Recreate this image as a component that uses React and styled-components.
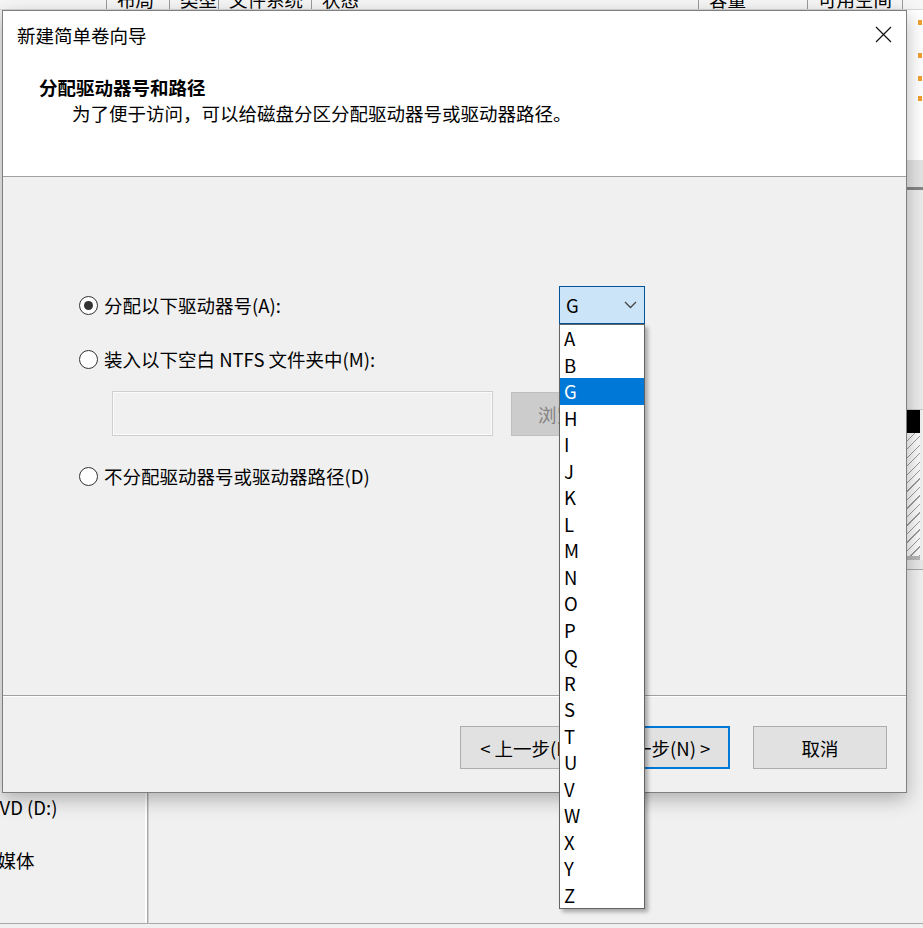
import styled, {createGlobalStyle} from 'styled-components';

const GlobalStyle = createGlobalStyle`
    html, body {
        margin: 0;
        padding: 0;
        background: #f0f0f0;
    }
    body {
        font-family: "Noto Sans CJK SC", "Noto Sans", sans-serif;
        color: #000;
    }
    * {
        box-sizing: border-box;
    }
`;

const FONT = 18.5;

const Screen = styled.div`
    position: relative;
    width: 923px;
    height: 928px;
    overflow: hidden;
    display: flex;
    flex-direction: column;
    background: #f0f0f0;
    font-size: ${FONT}px;
`;

/* ---------- window behind the dialog ---------- */

const ColumnHeader = styled.div`
    display: flex;
    height: 10px;
    overflow: hidden;
    background: #f6f6f6;
    border-bottom: 1px solid #d8d8d8;
`;

const HeaderCell = styled.div`
    width: ${({w}) => w}px;
    flex-shrink: 0;
    padding-left: 10px;
    border-right: 1px solid #9a9a9a;
    overflow: hidden;
    white-space: nowrap;
`;

const HeaderLabel = styled.span`
    display: block;
    line-height: 20px;
    margin-top: -11px;
    font-size: ${FONT}px;
`;

const Workspace = styled.div`
    flex: 1;
    display: flex;
    padding-bottom: 4px;
`;

const DiskLabels = styled.div`
    width: 148px;
    flex-shrink: 0;
    padding-top: 784px;
    border-right: 1px solid #a8a8a8;
    border-bottom: 1px solid #a8a8a8;
    box-shadow: inset -2px 0 0 #fdfdfd;
    overflow: hidden;
`;

const DiskLine = styled.div`
    line-height: 26px;
    white-space: nowrap;
    margin-left: ${({shift}) => shift}px;
    margin-bottom: ${({gap}) => gap || 0}px;
`;

const DiskMap = styled.div`
    flex: 1;
    display: flex;
    justify-content: flex-end;
    border-bottom: 1px solid #a8a8a8;
    border-left: 1px solid #d0d0d0;
`;

const EdgeStrip = styled.div`
    width: 16px;
    display: flex;
    flex-direction: column;
`;

const EdgeBlock = styled.div`
    height: ${({h}) => h}px;
    background: ${({bg}) => bg};
    margin-right: ${({inset}) => inset || 0}px;
    border-bottom: ${({line}) => (line ? `${line}` : 'none')};
    position: relative;
`;

const LegendDot = styled.span`
    position: absolute;
    right: 1px;
    top: ${({top}) => top}px;
    width: 4px;
    height: 5px;
    background: #f0a030;
`;

/* ---------- wizard dialog ---------- */

const Dialog = styled.div`
    position: absolute;
    left: 2px;
    top: 10px;
    width: 905px;
    height: 783px;
    display: flex;
    flex-direction: column;
    background: #f0f0f0;
    border: 1px solid #7f7f7f;
    box-shadow: 0 6px 18px rgba(0, 0, 0, 0.28);
`;

const DialogTop = styled.div`
    height: 166px;
    background: #fff;
    border-bottom: 1px solid #a0a0a0;
`;

const TitleBar = styled.div`
    height: 47px;
    display: flex;
    align-items: center;
    padding-left: 14px;
`;

const Title = styled.span`
    flex: 1;
    line-height: 26px;
`;

const CloseButton = styled.div`
    width: 46px;
    height: 47px;
    display: flex;
    align-items: center;
    justify-content: center;
`;

const Header = styled.div`
    padding: 16px 0 0 36px;
`;

const Heading = styled.div`
    font-weight: 700;
    line-height: 26px;
`;

const SubHeading = styled.div`
    line-height: 26px;
    padding-left: 33px;
`;

const DialogBody = styled.div`
    flex: 1;
    padding: 109px 0 0 76px;
`;

const OptionRow = styled.div`
    display: flex;
    align-items: center;
    height: ${({h}) => h || 26}px;
    margin-top: ${({mt}) => mt || 0}px;
`;

const RadioLabel = styled.label`
    display: flex;
    align-items: center;
    gap: 6px;
    line-height: 26px;
    white-space: nowrap;
    width: ${({w}) => (w ? `${w}px` : 'auto')};
`;

const RadioCircle = styled.span`
    width: 19px;
    height: 19px;
    border-radius: 50%;
    border: 1px solid #333;
    background: #fff;
    display: flex;
    align-items: center;
    justify-content: center;

    &::after {
        content: '';
        width: 9px;
        height: 9px;
        border-radius: 50%;
        background: #333;
        display: ${({checked}) => (checked ? 'block' : 'none')};
    }
`;

const PathInput = styled.div`
    margin-left: 33px;
    width: 381px;
    height: 45px;
    border: 1px solid #cfcfcf;
    background: #f0f0f0;
    box-shadow: inset 0 0 0 1px #fbfbfb;
`;

const BrowseButton = styled.div`
    margin-left: 18px;
    width: 130px;
    height: 44px;
    display: flex;
    align-items: center;
    padding-left: 26px;
    background: #cccccc;
    border: 1px solid #bfbfbf;
    color: #838383;
    white-space: nowrap;
    overflow: hidden;
`;

const ComboWrap = styled.div`
    position: relative;
`;

const Combo = styled.div`
    width: 86px;
    height: 38px;
    display: flex;
    align-items: center;
    justify-content: space-between;
    padding: 0 7px 0 6px;
    background: #cce4f7;
    border: 1px solid #005499;
`;

const DropList = styled.ul`
    position: absolute;
    top: 100%;
    left: 0;
    width: 86px;
    margin: 0;
    padding: 0;
    list-style: none;
    background: #fff;
    border: 1px solid #646464;
    box-shadow: 3px 3px 4px rgba(0, 0, 0, 0.3);
    z-index: 10;
`;

const DropItem = styled.li`
    height: 26.5px;
    line-height: 26.5px;
    padding-left: 4px;
    background: ${({selected}) => (selected ? '#0078d7' : 'transparent')};
    color: ${({selected}) => (selected ? '#fff' : '#000')};
`;

const DialogFooter = styled.div`
    height: 97px;
    border-top: 1px solid #a0a0a0;
    box-shadow: inset 0 1px 0 #fff;
    display: flex;
    justify-content: flex-end;
    align-items: flex-start;
    padding: 30px 19px 0 0;
`;

const WizardButton = styled.div`
    width: ${({w}) => w || 135}px;
    height: 43px;
    margin-left: ${({gap}) => gap || 0}px;
    display: flex;
    align-items: center;
    justify-content: center;
    white-space: nowrap;
    background: #e1e1e1;
    border: ${({focused}) => (focused ? '2px solid #0078d7' : '1px solid #adadad')};
`;

const Chevron = () => (
    <svg width="13" height="8" viewBox="0 0 13 8">
        <path d="M1 1 L6.5 6.5 L12 1" fill="none" stroke="#444" strokeWidth="1.3"/>
    </svg>
);

const CloseIcon = () => (
    <svg width="17" height="17" viewBox="0 0 17 17">
        <path d="M1 1 L16 16 M16 1 L1 16" stroke="#111" strokeWidth="1.2"/>
    </svg>
);

const columns = [
    {w: 107, label: ''},
    {w: 63, label: '布局'},
    {w: 49, label: '类型'},
    {w: 93, label: '文件系统'},
    {w: 387, label: '状态'},
    {w: 109, label: '容量'},
    {w: 95, label: '可用空间'},
    {w: 40, label: ''},
];

const letters = ['A', 'B', 'G', 'H', 'I', 'J', 'K', 'L', 'M', 'N', 'O', 'P', 'Q', 'R', 'S', 'T', 'U', 'V', 'W', 'X', 'Y', 'Z'];

export default function App() {
    return (
        <>
            <GlobalStyle/>
            <Screen>
                <ColumnHeader>
                    {columns.map((c, i) => (
                        <HeaderCell key={i} w={c.w}>
                            <HeaderLabel>{c.label}</HeaderLabel>
                        </HeaderCell>
                    ))}
                </ColumnHeader>
                <Workspace>
                    <DiskLabels>
                        <DiskLine shift={-13} gap={27}>DVD (D:)</DiskLine>
                        <DiskLine shift={-21}>无媒体</DiskLine>
                    </DiskLabels>
                    <DiskMap>
                        <EdgeStrip>
                            <EdgeBlock h={150} bg="#fff">
                                <LegendDot top={10}/>
                                <LegendDot top={43}/>
                                <LegendDot top={66}/>
                                <LegendDot top={86}/>
                            </EdgeBlock>
                            <EdgeBlock h={30} bg="#e4e4e4" line="3px solid #858585"/>
                            <EdgeBlock h={220} bg="#ebebeb" line="1px solid #c8c8c8"/>
                            <EdgeBlock h={23} bg="#000" inset={3}/>
                            <EdgeBlock
                                h={127}
                                inset={3}
                                bg="repeating-linear-gradient(135deg, #fafafa 0 5px, #9a9a9a 5px 6px)"
                                line="4px solid #b8b8b8"
                            />
                            <EdgeBlock h={10} bg="#e8e8e8" line="1px solid #a8a8a8"/>
                        </EdgeStrip>
                    </DiskMap>
                </Workspace>

                <Dialog>
                    <DialogTop>
                        <TitleBar>
                            <Title>新建简单卷向导</Title>
                            <CloseButton><CloseIcon/></CloseButton>
                        </TitleBar>
                        <Header>
                            <Heading>分配驱动器号和路径</Heading>
                            <SubHeading>为了便于访问，可以给磁盘分区分配驱动器号或驱动器路径。</SubHeading>
                        </Header>
                    </DialogTop>

                    <DialogBody>
                        <OptionRow h={38}>
                            <RadioLabel w={480}>
                                <RadioCircle checked/>
                                分配以下驱动器号(A):
                            </RadioLabel>
                            <ComboWrap>
                                <Combo>
                                    <span>G</span>
                                    <Chevron/>
                                </Combo>
                                <DropList>
                                    {letters.map(l => (
                                        <DropItem key={l} selected={l === 'G'}>{l}</DropItem>
                                    ))}
                                </DropList>
                            </ComboWrap>
                        </OptionRow>
                        <OptionRow mt={22}>
                            <RadioLabel>
                                <RadioCircle/>
                                装入以下空白 NTFS 文件夹中(M):
                            </RadioLabel>
                        </OptionRow>
                        <OptionRow h={45} mt={19}>
                            <PathInput/>
                            <BrowseButton>浏览(R)...</BrowseButton>
                        </OptionRow>
                        <OptionRow mt={27}>
                            <RadioLabel>
                                <RadioCircle/>
                                不分配驱动器号或驱动器路径(D)
                            </RadioLabel>
                        </OptionRow>
                    </DialogBody>

                    <DialogFooter>
                        <WizardButton>&lt; 上一步(B)</WizardButton>
                        <WizardButton focused>下一步(N) &gt;</WizardButton>
                        <WizardButton w={134} gap={23}>取消</WizardButton>
                    </DialogFooter>
                </Dialog>
            </Screen>
        </>
    );
}
